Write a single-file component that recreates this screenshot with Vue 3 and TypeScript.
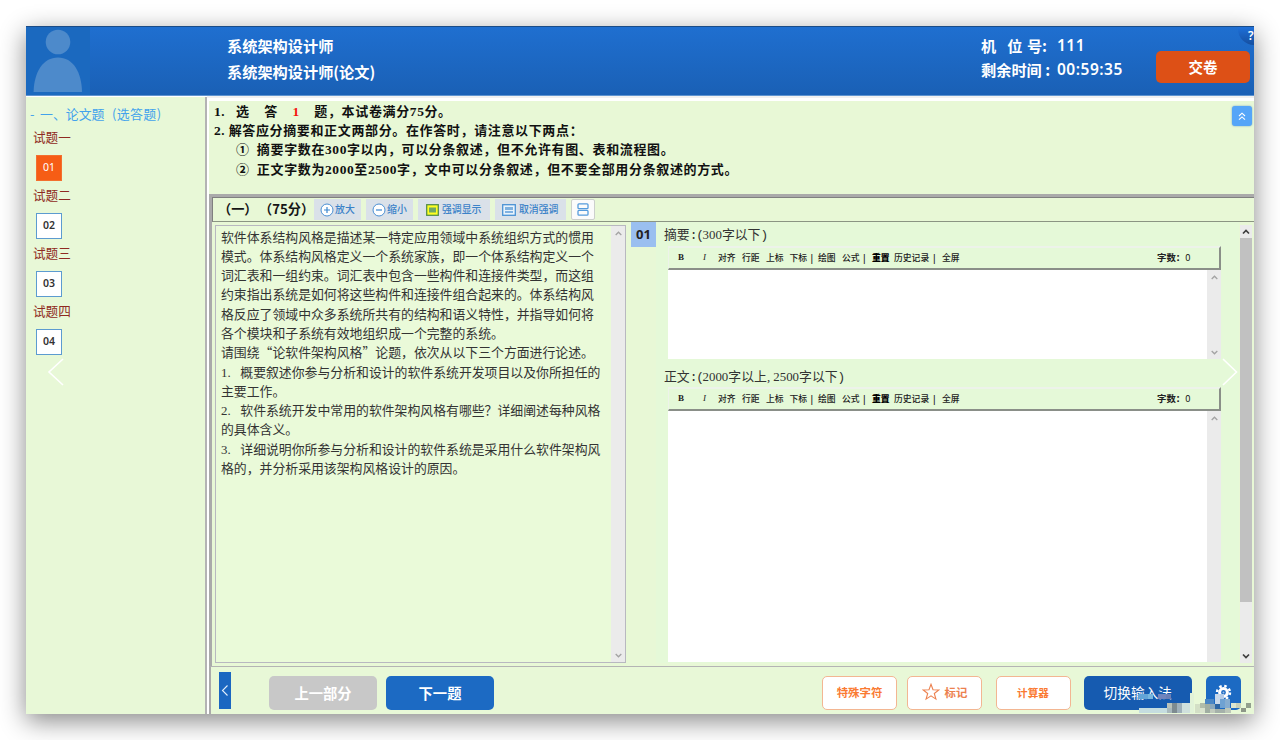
<script setup lang="ts">
interface Run {
  text: string
  kind: string
}

interface Tool {
  label: string
  width: number
  kind?: string
}

interface Editor {
  title: string
  size: string
}

// Splits a line so that digits and half-width punctuation keep half-cell widths.
function runs(line: string): Run[] {
  const parts = line.match(/\d+|[ .,]+|[:()]+|[^\d .:,()]+/g) ?? []
  return parts.map((text) => ({
    text,
    kind: /^\d/.test(text) ? 'num' : /^[ .,]/.test(text) ? 'dot' : /^[:()]/.test(text) ? 'half' : 'full',
  }))
}

const questions = [
  { label: '试题一', no: '01', active: true },
  { label: '试题二', no: '02', active: false },
  { label: '试题三', no: '03', active: false },
  { label: '试题四', no: '04', active: false },
]

const ruleLines = [
  '2.解答应分摘要和正文两部分。在作答时，请注意以下两点：',
  '   ① 摘要字数在300字以内，可以分条叙述，但不允许有图、表和流程图。',
  '   ② 正文字数为2000至2500字，文中可以分条叙述，但不要全部用分条叙述的方式。',
]

const passage = [
  '软件体系结构风格是描述某一特定应用领域中系统组织方式的惯用',
  '模式。体系结构风格定义一个系统家族，即一个体系结构定义一个',
  '词汇表和一组约束。词汇表中包含一些构件和连接件类型，而这组',
  '约束指出系统是如何将这些构件和连接件组合起来的。体系结构风',
  '格反应了领域中众多系统所共有的结构和语义特性，并指导如何将',
  '各个模块和子系统有效地组织成一个完整的系统。',
  '请围绕“论软件架构风格”论题，依次从以下三个方面进行论述。',
  '1. 概要叙述你参与分析和设计的软件系统开发项目以及你所担任的',
  '主要工作。',
  '2. 软件系统开发中常用的软件架构风格有哪些？详细阐述每种风格',
  '的具体含义。',
  '3. 详细说明你所参与分析和设计的软件系统是采用什么软件架构风',
  '格的，并分析采用该架构风格设计的原因。',
]

const tools: Tool[] = [
  { label: 'B', width: 25, kind: 'strong' },
  { label: 'I', width: 15, kind: 'slanted' },
  { label: '对齐', width: 24 },
  { label: '行距', width: 24 },
  { label: '上标', width: 23.5 },
  { label: '下标', width: 21 },
  { label: '|', width: 7.5, kind: 'bold' },
  { label: '绘图', width: 24 },
  { label: '公式', width: 21 },
  { label: '|', width: 9, kind: 'bold' },
  { label: '重置', width: 22, kind: 'heavy' },
  { label: '历史记录', width: 39 },
  { label: '|', width: 9, kind: 'bold' },
  { label: '全屏', width: 20 },
]

const editors: Editor[] = [
  { title: '摘要:(300字以下)', size: 'short' },
  { title: '正文:(2000字以上,2500字以下)', size: 'tall' },
]

const tiles: [number, number, number, number, string][] = [
  [50, 10, 10, 5, '#62a4d8'], [60, 10, 5, 5, '#78b6de'], [70, 10, 8, 5, '#7185bd'], [78, 10, 5, 5, '#6b7fb5'],
  [51, 24, 28, 5, '#c5dde0'], [79, 19, 5, 5, '#b9c1b8'], [84, 19, 5, 10, '#7d8b90'], [89, 19, 5, 10, '#9fb0ba'],
  [94, 19, 8, 10, '#cfe0dd'], [102, 9, 4, 20, '#e1f2d8'],
  [79, 24, 5, 5, '#a9b9bd'], [107, 20, 5, 9, '#d3dfc6'], [112, 19, 5, 5, '#b1bda9'], [112, 24, 5, 5, '#d9e3cd'],
  [117, 15, 9, 5, '#4a86c4'], [117, 20, 5, 9, '#a0aea2'], [122, 20, 5, 5, '#8aa8bd'], [127, 10, 5, 10, '#c9d9ea'],
  [127, 20, 5, 5, '#2c65a4'], [132, 10, 4, 5, '#b4cce8'], [132, 15, 5, 9, '#6fa2d2'], [137, 15, 5, 9, '#86add0'],
  [122, 25, 5, 4, '#c1cabd'], [127, 25, 10, 4, '#a5b1aa'], [137, 24, 6, 5, '#bdc7b9'], [143, 19, 5, 5, '#dce7d0'],
  [148, 19, 5, 5, '#c7d1ba'], [153, 24, 5, 4, '#8d9788'], [158, 19, 5, 5, '#92a08e'],
]
</script>

<template>
  <div class="stage" lang="zh-CN">
    <div class="window">
      <header class="top">
        <svg class="avatar" width="64" height="69" viewBox="0 0 64 69">
          <circle cx="32" cy="15" r="12.3" />
          <path d="M7.6 65C8 45 17 30.500 32 30.500S55.700 45 56 65Z" />
        </svg>
        <div class="titles">
          <div>系统架构设计师</div>
          <div>系统架构设计师(论文)</div>
        </div>
        <div class="seat">
          <div class="seat-row"><span class="seat-key spread"><span>机</span><span>位</span><span>号:</span></span><span class="seat-val">111</span></div>
          <div class="seat-row second"><span class="seat-key">剩余时间 :</span><span class="seat-val">00:59:35</span></div>
        </div>
        <button class="submit">交卷</button>
        <div class="help"><span>?</span></div>
      </header>

      <div class="body">
        <aside class="side">
          <div class="side-title"><span class="dash">-</span><span class="sec">一、论文题</span><span class="choice">(选答题)</span></div>
          <div v-for="q in questions" :key="q.no" class="q">
            <div class="q-label">{{ q.label }}</div>
            <div class="q-no" :class="{ active: q.active }">{{ q.no }}</div>
          </div>
          <svg class="nav-prev" width="18" height="30" viewBox="0 0 18 30"><path d="M16 2L2 15l14 13" /></svg>
        </aside>

        <main class="main">
          <section class="rules">
            <div class="line"><span v-for="(r, i) in runs('1. 选  答  ')" :key="i" :class="r.kind">{{ r.text }}</span><span class="num red">1</span><span v-for="(r, i) in runs('  题，本试卷满分75分。')" :key="'b' + i" :class="r.kind">{{ r.text }}</span></div>
            <div v-for="(l, n) in ruleLines" :key="n" class="line"><span v-for="(r, i) in runs(l)" :key="i" :class="r.kind">{{ r.text }}</span></div>
            <div class="fold">
              <svg width="8" height="9" viewBox="0 0 8 9"><path d="M1 4L4 1.200 7 4M1 7.700L4 4.900 7 7.700" /></svg>
            </div>
          </section>

          <section class="paper">
            <div class="paper-bar">
              <span class="part">（一）</span><span class="score">（75分）</span>
              <button class="chip">
                <svg width="14" height="14" viewBox="0 0 14 14"><circle class="disc" cx="7" cy="7" r="6" /><path d="M4 7h6M7 4v6" /></svg><span>放大</span>
              </button>
              <button class="chip">
                <svg width="14" height="14" viewBox="0 0 14 14"><circle class="disc" cx="7" cy="7" r="6" /><path d="M4 7h6" /></svg><span>缩小</span>
              </button>
              <button class="chip wide">
                <svg class="mark" width="13" height="12" viewBox="0 0 13 12"><rect x=".7" y=".7" width="11.600" height="10.600" fill="#ffff20" stroke="#568f4d" stroke-width="1.300" /><rect x="3" y="3.500" width="7" height="5" fill="#6fa864" /></svg><span>强调显示</span>
              </button>
              <button class="chip wide">
                <svg class="mark" width="14" height="12" viewBox="0 0 14 12"><rect x=".7" y=".7" width="12.600" height="10.600" fill="#e9f3fc" stroke="#4a92d4" stroke-width="1.300" /><rect x="3" y="3" width="8" height="3" fill="#7eb1df" /><path d="M3 8h8" /></svg><span>取消强调</span>
              </button>
              <button class="split">
                <svg width="12" height="13" viewBox="0 0 12 13"><rect x="1" y=".8" width="10" height="4.900" rx="1" /><rect x="1" y="7.300" width="10" height="4.900" rx="1" /></svg>
              </button>
            </div>

            <div class="columns">
              <div class="passage">
                <div class="passage-text">
                  <div v-for="(l, n) in passage" :key="n" class="line"><span v-for="(r, i) in runs(l)" :key="i" :class="r.kind">{{ r.text }}</span></div>
                </div>
                <div class="bar">
                  <svg width="7" height="5" viewBox="0 0 7 5"><path d="M.7 4L3.500 1.200 6.300 4" /></svg>
                  <svg width="7" height="5" viewBox="0 0 7 5"><path d="M.7 1L3.500 3.800 6.300 1" /></svg>
                </div>
              </div>

              <div class="answer">
                <div class="badge">01</div>
                <div class="editors">
                  <div v-for="e in editors" :key="e.size" class="editor" :class="e.size">
                    <div class="editor-title line"><span v-for="(r, i) in runs(e.title)" :key="i" :class="r.kind">{{ r.text }}</span></div>
                    <div class="editor-tools">
                      <span v-for="(t, i) in tools" :key="i" class="tool" :class="t.kind" :style="{ width: t.width + 'px' }">{{ t.label }}</span>
                      <span class="count">字数：<span class="zero">0</span></span>
                    </div>
                    <div class="editor-area">
                      <div class="bar">
                        <svg width="7" height="5" viewBox="0 0 7 5"><path d="M.7 4L3.500 1.200 6.300 4" /></svg>
                        <svg v-if="e.size === 'short'" width="7" height="5" viewBox="0 0 7 5"><path d="M.7 1L3.500 3.800 6.300 1" /></svg>
                      </div>
                    </div>
                  </div>
                </div>
                <div class="scroll">
                  <svg width="8" height="6" viewBox="0 0 8 6"><path d="M1 4.500L4 1.500 7 4.500" /></svg>
                  <div class="thumb"></div>
                  <svg width="8" height="6" viewBox="0 0 8 6"><path d="M1 1.500L4 4.500 7 1.500" /></svg>
                </div>
                <svg class="nav-next" width="18" height="30" viewBox="0 0 18 30"><path d="M2 2l13.500 13L2 28" /></svg>
              </div>
            </div>
          </section>

          <footer class="foot">
            <button class="collapse">
              <svg width="8" height="13" viewBox="0 0 8 13"><path d="M6.500 1.500L1.500 6.500l5 5" /></svg>
            </button>
            <button class="btn gray">上一部分</button>
            <button class="btn blue">下一题</button>
            <div class="tools-right">
              <button class="btn line-btn">特殊字符</button>
              <button class="btn line-btn star">
                <svg width="18" height="18" viewBox="0 0 18 18"><path d="M9 1.300l2 5.400 5.800.2-4.500 3.600 1.600 5.600L9 12.900l-4.900 3.200 1.600-5.600L1.200 6.900 7 6.700Z" /></svg>标记
              </button>
              <button class="btn line-btn calc">计算器</button>
              <button class="btn blue ime">切换输入法</button>
              <button class="btn blue gear">
                <svg width="17" height="17" viewBox="0 0 17 17">
                  <circle cx="8.500" cy="8.500" r="6.500" stroke-width="2.400" stroke-dasharray="2.500 2.600" />
                  <circle cx="8.500" cy="8.500" r="3.900" stroke-width="3" />
                  <circle class="hub" cx="8.500" cy="8.500" r="1" />
                </svg>
              </button>
            </div>
            <svg class="tiles" width="166" height="30" viewBox="0 0 166 30">
              <rect v-for="(t, i) in tiles" :key="i" :x="t[0]" :y="t[1]" :width="t[2]" :height="t[3]" :fill="t[4]" />
            </svg>
          </footer>
        </main>
      </div>
    </div>
  </div>
</template>

<style>
body {
  background: #fff;
  overflow: hidden;
}
</style>

<style scoped>
* {
  box-sizing: border-box;
}
.stage {
  width: 1280px;
  height: 740px;
  padding: 26px;
  background: #fff;
  overflow: hidden;
  font-family: "Noto Sans CJK SC", "Noto Sans", sans-serif;
}
button {
  font-family: inherit;
  border: 0;
  padding: 0;
  margin: 0;
}
svg {
  fill: none;
  flex: none;
}
.window {
  width: 1228px;
  height: 688px;
  background: #fff;
  box-shadow: 0 7px 24px rgba(0, 0, 0, 0.47);
  display: flex;
  flex-direction: column;
}

/* Header */
.top {
  position: relative;
  height: 70px;
  flex: none;
  display: flex;
  overflow: hidden;
  background: linear-gradient(#1f6fd0, #1a60b5);
  border-top: 1px solid #1b4c87;
  border-bottom: 1px solid #5f94d0;
  color: #fff;
  font-weight: 700;
}
.avatar {
  background: #1b69bf;
}
.avatar circle,
.avatar path {
  fill: #4d8acb;
}
.titles {
  margin-left: 137px;
  padding-top: 5px;
  width: 754px;
  font-size: 15.2px;
  line-height: 26px;
}
.seat {
  width: 175px;
  padding-top: 5px;
  font-size: 15.2px;
  line-height: 26px;
}
.seat-row {
  display: flex;
}
.second {
  margin-top: -2px;
}
.seat-key {
  width: 76px;
  white-space: pre;
}
.spread span:nth-child(2) {
  margin-left: 11px;
}
.spread span:nth-child(3) {
  margin-left: 4.500px;
}
.seat-val {
  font-family: "Noto Sans", sans-serif;
  font-weight: 600;
  font-size: 15.500px;
  letter-spacing: 0.5px;
}
.submit {
  width: 94px;
  height: 32px;
  margin-top: 24px;
  padding-bottom: 2px;
  border-radius: 5px;
  background: #dd5016;
  color: #fff;
  font-size: 14.500px;
  font-weight: 700;
}
.help {
  position: absolute;
  right: -16px;
  top: -14px;
  width: 32px;
  height: 32px;
  border-radius: 50%;
  background: linear-gradient(#1d6fd8 45%, #164f9f);
  font: 600 12px "Noto Sans", sans-serif;
}
.help span {
  position: absolute;
  left: 10px;
  top: 15px;
  line-height: 16px;
}

/* Sidebar */
.body {
  flex: 1;
  display: flex;
  min-height: 0;
}
.side {
  position: relative;
  width: 181px;
  flex: none;
  margin-top: 1px;
  background: #e8f8d7;
  border-right: 2px solid #b3b3b3;
}
.side-title {
  display: flex;
  padding: 7.500px 0 0 4px;
  height: 29.500px;
  line-height: 18px;
  font-size: 12.900px;
  color: #42a2ec;
  white-space: nowrap;
}
.dash {
  width: 10px;
}
.sec {
  width: 72px;
}
.choice {
  letter-spacing: 0.4px;
}
.q {
  height: 58px;
  padding-left: 7px;
}
.q-label {
  line-height: 20px;
  font-size: 12.600px;
  color: #8f2a22;
}
.q-no {
  width: 26px;
  height: 26px;
  margin: 8px 0 0 3px;
  background: #fff;
  border: 1px solid #5c9bd0;
  color: #333;
  font: 600 10.500px/23px "Noto Sans", sans-serif;
  text-align: center;
}
.q-no.active {
  background: #f65d15;
  border-color: #f3702f;
  color: #fff;
  font-weight: 400;
}
.nav-prev {
  position: absolute;
  left: 21px;
  top: 260px;
}
.nav-prev path,
.nav-next path {
  stroke: #fff;
  stroke-width: 1.6;
}

/* Text on a half/full cell grid */
.line {
  white-space: pre;
}
.line .num,
.line .dot {
  font-family: "Liberation Serif", serif;
}
.line .half {
  font-family: "Liberation Mono", monospace;
}

/* Instructions */
.main {
  flex: 1;
  min-width: 0;
  display: flex;
  flex-direction: column;
  padding-left: 2px;
  background: #fff;
  border-top: 2px solid #f1f1f1;
}
.rules {
  position: relative;
  height: 95px;
  flex: none;
  margin-top: 1px;
  border-top: 2px solid #fff;
  padding: 0 0 0 5px;
  background: #e8f8d6;
  font-size: 13px;
  font-weight: 700;
  color: #111;
}
.rules .line {
  height: 19.200px;
  line-height: 19.200px;
}
.rules .full {
  letter-spacing: 0.64px;
}
.rules .num {
  font-size: 13.500px;
  letter-spacing: 0.55px;
}
.rules .dot {
  letter-spacing: 4.050px;
}
.red {
  color: #f5120c;
}
.fold {
  position: absolute;
  right: 2px;
  top: 5px;
  width: 20px;
  height: 20px;
  border-radius: 3px;
  background: #55a5f8;
  box-shadow: 0 0 2px #6f9fc4;
  display: flex;
  align-items: center;
  justify-content: center;
}
.fold path {
  stroke: #fff;
  stroke-width: 1.1;
}

/* Question area */
.paper {
  height: 473px;
  flex: none;
  background: #e8f8d6;
  border-top: 3px solid #aaa;
  border-left: 3px solid #aaa;
  border-bottom: 1px solid #b4b4b4;
  display: flex;
  flex-direction: column;
}
.paper-bar {
  height: 25px;
  flex: none;
  display: flex;
  align-items: center;
  border-top: 1px solid #808080;
  border-left: 1px solid #808080;
  border-bottom: 1px solid #8b9583;
  font-size: 13.200px;
  font-weight: 700;
  color: #151515;
}
.part,
.score {
  line-height: 20px;
  padding-bottom: 2px;
}
.part {
  width: 41px;
  margin-left: 5px;
}
.score {
  width: 55px;
  white-space: nowrap;
}
.chip {
  width: 47px;
  height: 21px;
  flex: none;
  margin-right: 5px;
  display: flex;
  align-items: center;
  justify-content: center;
  gap: 1px;
  background: #dae1e9;
  color: #3b82c8;
  font-size: 9.900px;
  font-weight: 500;
  white-space: nowrap;
}
.chip span {
  padding-bottom: 1px;
}
.chip.wide {
  width: 71.500px;
  gap: 3px;
}
.chip path {
  stroke: #3b87d0;
  stroke-width: 1.2;
}
.chip .disc {
  fill: #fff;
  stroke: #4a8fd4;
  stroke-width: 1;
}
.split {
  width: 24px;
  height: 21px;
  display: flex;
  align-items: center;
  justify-content: center;
  background: #fbfbfb;
  border: 1px solid #ccd0cc;
  border-radius: 2px;
}
.split rect {
  stroke: #559bdc;
  stroke-width: 1.3;
}
.columns {
  flex: 1;
  display: flex;
  min-height: 0;
}
.passage {
  width: 411px;
  margin: 3px 5px 3px 3px;
  flex: none;
  display: flex;
  border: 1px solid #b8b8c0;
  background: #eafad9;
  color: #333;
}
.passage-text {
  flex: 1;
  padding: 0.500px 0 0 5px;
  font-size: 12.860px;
}
.passage-text .line {
  height: 19.300px;
  line-height: 19.300px;
}
.passage-text .dot,
.editor-title .dot {
  letter-spacing: 3.210px;
}
.editor-title .half {
  letter-spacing: -1.290px;
}
.bar {
  width: 14px;
  flex: none;
  display: flex;
  flex-direction: column;
  align-items: center;
  justify-content: space-between;
  padding: 5px 0 4px;
  background: #ebebeb;
}
.bar path {
  stroke: #a3a3a3;
  stroke-width: 1.3;
}
.answer {
  position: relative;
  flex: 1;
  display: flex;
  min-width: 0;
}
.badge {
  width: 25px;
  height: 25px;
  flex: none;
  background: #9abff0;
  color: #222;
  font: 700 13px/24px "Noto Sans", sans-serif;
  text-align: center;
}
.editors {
  width: 583px;
  margin-bottom: 3px;
  background: #e5f9d8;
}
.editor-title {
  padding-left: 8px;
  height: 24px;
  line-height: 24px;
  font-size: 12.860px;
  color: #333;
}
.tall .editor-title {
  height: 28px;
  line-height: 33px;
}
.editor-tools {
  display: flex;
  align-items: center;
  width: 553px;
  height: 23.500px;
  margin-left: 12px;
  padding: 0 0 1px 9px;
  border-top: 2px solid #edf3ea;
  border-left: 1px solid #edf3ea;
  border-right: 2px solid #8a8f88;
  border-bottom: 2px solid #8a8f88;
  font-size: 8.800px;
  font-weight: 500;
  color: #222;
  white-space: nowrap;
}
.tool {
  flex: none;
}
.strong {
  font: 700 9px "Liberation Serif", serif;
}
.slanted {
  font: italic 9px "Liberation Serif", serif;
}
.bold {
  font-weight: 700;
}
.heavy {
  font-weight: 900;
  color: #000;
}
.count {
  margin-left: auto;
  width: 62px;
  font-size: 9.400px;
  font-weight: 700;
}
.zero {
  font-weight: 400;
}
.editor-area {
  display: flex;
  justify-content: flex-end;
  width: 553px;
  margin-left: 12px;
  background: #fff;
}
.short .editor-area {
  height: 89.500px;
}
.tall .editor-area {
  height: 251.500px;
}
.scroll {
  width: 12px;
  height: 438px;
  margin: 3px 0 0 1px;
  flex: none;
  display: flex;
  flex-direction: column;
  align-items: center;
  background: #ebebeb;
}
.scroll path {
  stroke: #3f3f3f;
  stroke-width: 1.7;
}
.scroll svg:first-child {
  margin-top: 4px;
}
.thumb {
  width: 12px;
  height: 364px;
  margin: 3px 0 51px;
  background: #c1c1c1;
}
.nav-next {
  position: absolute;
  left: 590px;
  top: 135px;
}

/* Footer */
.foot {
  position: relative;
  flex: 1;
  display: flex;
  align-items: flex-start;
  padding: 9px 13px 0 8px;
  background: #e8f8d7;
  border-left: 2px solid #aaa;
}
.collapse {
  width: 12px;
  height: 37px;
  margin-top: -4px;
  background: #1b67c1;
  display: flex;
  align-items: center;
  justify-content: center;
}
.collapse path {
  stroke: #e4effb;
  stroke-width: 1.1;
}
.btn {
  height: 34px;
  padding-bottom: 2px;
  border-radius: 5px;
  color: #fff;
  font-size: 14.300px;
  font-weight: 700;
  white-space: nowrap;
}
.gray {
  width: 108px;
  margin-left: 38px;
  background: #c8c8c8;
}
.blue {
  width: 108px;
  margin-left: 9px;
  background: #1c6ac3;
}
.tools-right {
  margin-left: auto;
  display: flex;
}
.line-btn {
  width: 75px;
  margin-right: 10px;
  background: #fff;
  border: 1px solid #f3b692;
  color: #fa7a32;
  font-size: 11.400px;
}
.star {
  display: flex;
  align-items: center;
  justify-content: center;
  gap: 5px;
  margin-right: 13.500px;
  color: #ec814f;
}
.star path {
  stroke: #ec814f;
  stroke-width: 1.1;
}
.calc {
  margin-right: 13.500px;
  font-size: 10.600px;
}
.ime {
  margin-left: 0;
  width: 107.500px;
  background: #165bb0;
  font-weight: 400;
  font-size: 13.700px;
}
.gear {
  display: flex;
  align-items: center;
  justify-content: center;
  margin-left: 14.500px;
  width: 35px;
}
.gear circle {
  stroke: #fff;
}
.gear .hub {
  fill: #9dc0e8;
  stroke: none;
}
.tiles {
  position: absolute;
  right: 0;
  bottom: 0;
}
</style>
